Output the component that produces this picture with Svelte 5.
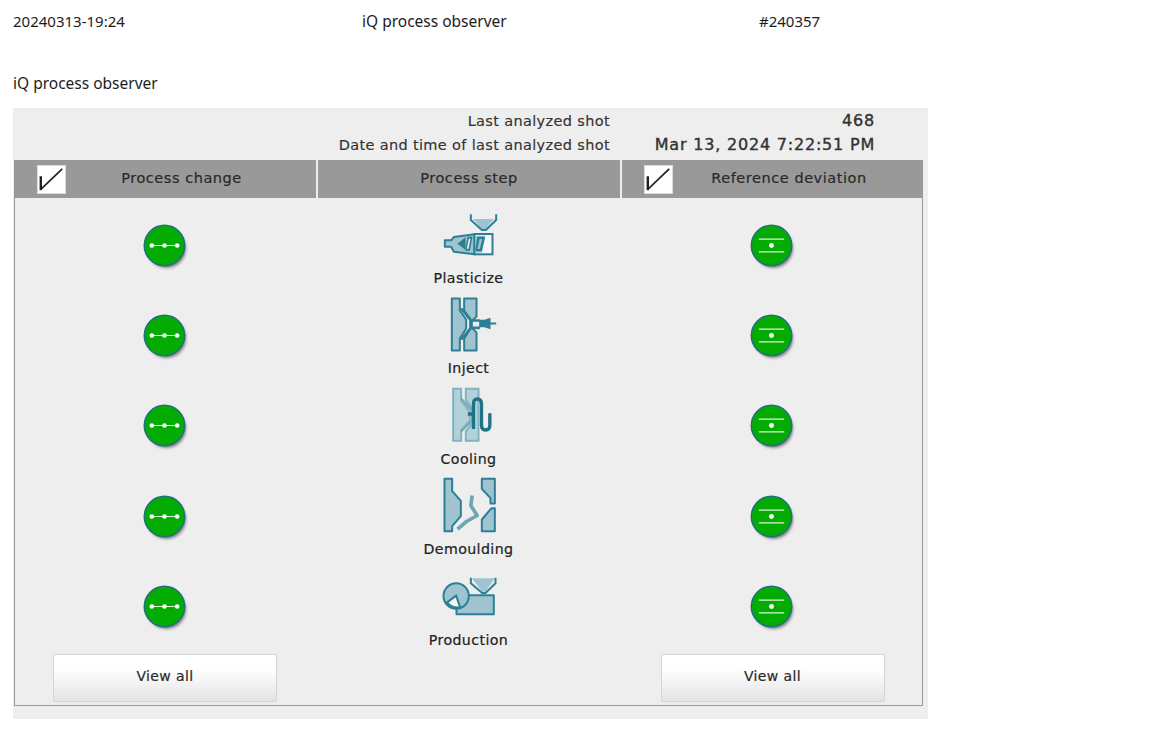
<script>
  const steps = ['Plasticize', 'Inject', 'Cooling', 'Demoulding', 'Production'];
</script>

<div class="page">
  <div class="head">
    <span class="num">20240313-19:24</span>
    <span>iQ process observer</span>
    <span class="num">#240357</span>
  </div>
  <p class="title">iQ process observer</p>

  <div class="panel">
    <div class="info">
      <span>Last analyzed shot</span>
      <strong>468</strong>
      <span>Date and time of last analyzed shot</span>
      <strong>Mar 13, 2024 7:22:51 PM</strong>
    </div>

    <div class="box">
      <div class="bar">
        <div class="bar-cell">
          <svg class="check" viewBox="0 0 29 29">
            <path d="M3 26V11" stroke="#222" stroke-width="2.6" fill="none" />
            <path d="M3 25L26 3" stroke="#222" stroke-width="1.8" fill="none" />
          </svg>
          <span>Process change</span>
        </div>
        <div class="bar-cell mid"><span>Process step</span></div>
        <div class="bar-cell last">
          <svg class="check" viewBox="0 0 29 29">
            <path d="M3 26V11" stroke="#222" stroke-width="2.6" fill="none" />
            <path d="M3 25L26 3" stroke="#222" stroke-width="1.8" fill="none" />
          </svg>
          <span>Reference deviation</span>
        </div>
      </div>

      <div class="rows">
        {#each steps as step}
          <div class="cell">
            <svg class="dot" viewBox="0 0 40 40">
              <path d="M7 20H33" stroke="#d8f5d8" stroke-width="1.2" />
              <circle cx="7" cy="20" r="2.4" fill="#fff" />
              <circle cx="20" cy="20" r="2.4" fill="#fff" />
              <circle cx="33" cy="20" r="2.4" fill="#fff" />
            </svg>
          </div>
          <div class="step">
            {#if step === 'Plasticize'}
              <svg class="icon" viewBox="85.5 6 180 180">
                <path class="lt" d="M188 42H250L225 72H213Z" />
                <path class="ln" d="M181 28V45L214 75H226L257 45V28" />
                <path class="lt ln" d="M103 106H122L130 96L192 88V148L130 140L122 125H103Z" />
                <rect class="wh" x="192" y="87" width="54" height="61" />
                <path class="lt" d="M197 92H224L214 143H197Z" />
                <path class="dk" d="M141 116L165 97V135Z" />
                <path class="dk" d="M171 95H186L178 137H164Z" />
                <path class="wh2" d="M175 101H180L174 131H169Z" />
                <path class="dk" d="M200 95H224L214 139H194Z" />
                <path class="lt" d="M207 102H215L208 132H201Z" />
              </svg>
            {:else if step === 'Inject'}
              <svg class="icon" viewBox="85.5 277.5 180 180">
                <path class="lt ln" d="M124 282H148V318L167 345V372L148 402V438H124Z" />
                <path class="lt ln" d="M161 282H198V336L184 350V370L198 384V438H161V402L179 374V342L161 318Z" />
                <path class="ln thick" d="M152 312L181 348H208M152 405L181 370H208" />
                <path class="dk" d="M206 346H222L240 340V374L222 368H206Z" />
                <path class="ln" d="M238 357H257" />
              </svg>
            {:else if step === 'Cooling'}
              <svg class="icon" viewBox="85.5 24 180 180">
                <path class="pale" d="M128 26H152V62L178 95V122L152 150V182H128Z" />
                <path class="pale" d="M166 26H204V182H166V154L190 124V92L166 60Z" />
                <path class="ln" style="stroke:#6fa9b8" d="M152 55L185 92V122L152 155" />
                <path class="pipe" d="M172 102H189M189 147V72Q189 57 200 57Q213 57 213 72V135Q213 150 225 150Q238 150 238 135V100" />
              </svg>
            {:else if step === 'Demoulding'}
              <svg class="icon" viewBox="85.5 295.5 180 180">
                <path class="lt ln" d="M102 298H125V335L151 364V410L125 440V455H102Z" />
                <path class="lt ln" d="M253 298H214V328L240 356V372H253Z" />
                <path class="lt ln" d="M253 386H243L214 420V455H253Z" />
                <path class="part" d="M185 348L181 378L200 408L168 426L141 449" />
              </svg>
            {:else}
              <svg class="icon" viewBox="85.5 12 180 180">
                <path class="lt" d="M184 40H253L225 80H215Z" />
                <path class="ln" d="M181 38V55L215 84H225L255 55V38" />
                <rect class="lt ln" x="138" y="91" width="112" height="57" />
                <circle class="lt ln" cx="137" cy="93" r="38" />
                <path class="wh" d="M137 92L110 112Q122 130 149 127Z" />
              </svg>
            {/if}
            <span class="label">{step}</span>
          </div>
          <div class="cell">
            <svg class="dot" viewBox="0 0 40 40">
              <path d="M7 13.5H33M7 26.5H33" stroke="#d8f5d8" stroke-width="1.2" />
              <circle cx="20" cy="20" r="2.5" fill="#fff" />
            </svg>
          </div>
        {/each}
      </div>

      <div class="foot">
        <div class="foot-cell"><button>View all</button></div>
        <div></div>
        <div class="foot-cell"><button>View all</button></div>
      </div>
    </div>
  </div>
</div>

<style>
  :global(body) {
    background: #fff;
  }

  .page {
    padding: 12px 0 0 13px;
    color: #1c1c1c;
    font-family: "Noto Sans", sans-serif;
    font-size: 15.5px;
    line-height: 18px;
  }

  .head {
    display: grid;
    grid-template-columns: 349px 397px auto;
  }

  .num {
    font-size: 15px;
  }

  .title {
    margin: 44px 0 0;
  }

  .panel {
    width: 915px;
    height: 611px;
    margin-top: 16px;
    background: #eee;
    font-family: "DejaVu Sans", sans-serif;
    box-sizing: border-box;
  }

  .info {
    display: grid;
    grid-template-columns: 597px 265px;
    grid-auto-rows: 24px;
    height: 52px;
    padding-top: 1px;
    box-sizing: border-box;
    font-size: 14.5px;
    letter-spacing: 0.35px;
    line-height: 24px;
    color: #333;
    text-align: right;
    -webkit-text-stroke: 0.15px #333;
  }

  .info strong {
    font-weight: 400;
    font-size: 16px;
    letter-spacing: 0.8px;
    -webkit-text-stroke: 0.4px #333;
  }

  .box {
    width: 909px;
    height: 546px;
    margin-left: 1px;
    box-sizing: border-box;
    border: 1px solid #9a9a9a;
    border-top: 0;
  }

  .bar {
    display: grid;
    grid-template-columns: 302px 306px 1fr;
    height: 38px;
    margin: 0 -1px;
    padding-bottom: 2px;
    box-sizing: border-box;
    background: #999;
    font-size: 14.5px;
    letter-spacing: 0.55px;
    color: #2a2a2a;
    -webkit-text-stroke: 0.2px #2a2a2a;
  }

  .bar-cell {
    position: relative;
    display: flex;
    align-items: center;
    justify-content: center;
  }

  .bar-cell span {
    margin-left: 33px;
  }

  .bar-cell.mid {
    margin-bottom: -2px;
    border-left: 2px solid #eee;
    border-right: 2px solid #eee;
  }

  .bar-cell.mid span {
    margin-left: 0;
    margin-bottom: 2px;
  }

  .check {
    position: absolute;
    left: 23px;
    top: 5px;
    width: 29px;
    height: 29px;
    background: #fff;
    border: 1px solid #ddd;
    box-sizing: border-box;
  }

  .last .check {
    left: 22px;
  }

  .rows {
    display: grid;
    grid-template-columns: 299px 309px 297px;
    grid-auto-rows: 90.4px;
    padding-top: 2px;
  }

  .cell {
    display: flex;
    align-items: center;
    justify-content: center;
  }

  .dot {
    width: 39px;
    height: 39px;
    border-radius: 50%;
    background: #03ab03;
    box-shadow:
      0 0 0 1.5px #1f6f85,
      2px 3px 3px rgba(40, 40, 40, 0.55);
  }

  .step {
    display: flex;
    flex-direction: column;
    align-items: center;
    padding-top: 7px;
  }

  .icon {
    display: block;
    width: 60px;
    height: 60px;
    overflow: visible;
  }

  .label {
    margin-top: 3px;
    font-size: 14.2px;
    line-height: 16px;
    letter-spacing: 0.4px;
    color: #222;
    -webkit-text-stroke: 0.2px #222;
  }

  .lt {
    fill: #9fc4cf;
  }

  .pale {
    fill: #b4d0d8;
    stroke: #7fb3c1;
    stroke-width: 6;
  }

  .ln {
    stroke: #2d7f96;
    stroke-width: 6;
    stroke-linejoin: round;
  }

  path.ln:not(.lt) {
    fill: none;
  }

  .thick {
    stroke-width: 8;
  }

  .wh {
    fill: #f4f7f8;
    stroke: #2d7f96;
    stroke-width: 6;
  }

  .wh2 {
    fill: #f4f7f8;
  }

  .dk {
    fill: #2d7f96;
  }

  .pipe {
    fill: none;
    stroke: #1f7389;
    stroke-width: 10;
  }

  .part {
    fill: none;
    stroke: #6ea6b6;
    stroke-width: 11;
    stroke-linejoin: round;
  }

  .foot {
    display: grid;
    grid-template-columns: 300px 308px 299px;
    padding-top: 2px;
  }

  .foot-cell {
    display: flex;
    justify-content: center;
  }

  button {
    width: 224px;
    height: 48px;
    padding: 0 0 3px;
    border: 1px solid #d4d4d4;
    border-radius: 2px;
    background: linear-gradient(#fff 30%, #e4e4e4);
    font: 14px "DejaVu Sans", sans-serif;
    letter-spacing: 0.4px;
    color: #2a2a2a;
    -webkit-text-stroke: 0.2px #2a2a2a;
  }
</style>
